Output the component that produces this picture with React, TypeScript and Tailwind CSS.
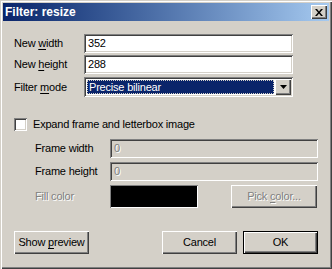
import React from 'react';

const sunken =
  'shadow-[inset_1px_1px_#808080,inset_-1px_-1px_#ffffff,inset_2px_2px_#404040,inset_-2px_-2px_#d4d0c8]';
const raised =
  'shadow-[inset_1px_1px_#ffffff,inset_-1px_-1px_#404040,inset_-2px_-2px_#808080]';

const Label: React.FC<{ pre: string; key_: string; post: string; className?: string }> = ({ pre, key_, post, className }) => (
  <span className={className}>
    {pre}
    <span className="underline underline-offset-[2px]">{key_}</span>
    {post}
  </span>
);

const DisabledText: React.FC<{ children: React.ReactNode }> = ({ children }) => (
  <span className="text-[#808080] [text-shadow:1px_1px_0_#ffffff]">{children}</span>
);

export default function App() {
  return (
    <div
      className={
        "w-[332px] h-[269px] bg-[#d4d0c8] p-[3px] flex flex-col text-[11px] tracking-[-0.2px] text-black font-['Liberation_Sans',Arial,sans-serif] " +
        'shadow-[inset_1px_1px_#d4d0c8,inset_2px_2px_#ffffff,inset_-1px_-1px_#404040,inset_-2px_-2px_#808080]'
      }
    >
      {/* title bar */}
      <div className="h-[18px] flex items-center justify-between pl-[2px] pr-[2px] bg-gradient-to-r from-[#0a246a] to-[#a6caf0]">
        <span className="text-white font-bold text-[12px] tracking-normal">Filter: resize</span>
        <div className={`w-[16px] h-[14px] bg-[#d4d0c8] flex items-center justify-center ${raised}`}>
          <svg width="8" height="7" viewBox="0 0 8 7">
            <path d="M0 0h2l2 2.5L6 0h2L5 3.5 8 7H6L4 4.5 2 7H0l3-3.5z" fill="#000" />
          </svg>
        </div>
      </div>

      <div className="flex flex-col pl-[11px]">
        <div className="mt-[13px] h-[19px] flex items-center">
          <Label pre="New " key_="w" post="idth" className="w-[70px]" />
          <div className={`w-[209px] h-[19px] bg-white flex items-center pl-[4px] ${sunken}`}>352</div>
        </div>
        <div className="mt-[2px] h-[19px] flex items-center">
          <Label pre="New " key_="h" post="eight" className="w-[70px]" />
          <div className={`w-[209px] h-[19px] bg-white flex items-center pl-[4px] ${sunken}`}>288</div>
        </div>
        <div className="mt-[3px] h-[20px] flex items-center">
          <Label pre="Filter " key_="m" post="ode" className="w-[70px]" />
          <div className={`w-[209px] h-[20px] bg-white flex items-stretch p-[2px] ${sunken}`}>
            <div className="flex-1 p-[1px]">
              <div className="h-full bg-[#0a246a] outline-1 outline-dotted outline-offset-[-1px] outline-[#d4d0c8] text-white flex items-center pl-[2px]">
                Precise bilinear
              </div>
            </div>
            <div className={`w-[16px] bg-[#d4d0c8] flex items-center justify-center ${raised}`}>
              <svg width="7" height="4" viewBox="0 0 7 4">
                <path d="M0 0h7L3.5 4z" fill="#000" />
              </svg>
            </div>
          </div>
        </div>

        <div className="mt-[21px] h-[13px] flex items-center">
          <div className={`w-[13px] h-[13px] bg-white ${sunken}`} />
          <span className="ml-[6px]">Expand frame and letterbox image</span>
        </div>

        <div className="mt-[8px] h-[19px] flex items-center pl-[21px]">
          <span className="w-[75px]">Frame width</span>
          <div className={`w-[208px] h-[19px] bg-[#d4d0c8] flex items-center pl-[4px] ${sunken}`}>
            <DisabledText>0</DisabledText>
          </div>
        </div>
        <div className="mt-[4px] h-[19px] flex items-center pl-[21px]">
          <span className="w-[75px]">Frame height</span>
          <div className={`w-[208px] h-[19px] bg-[#d4d0c8] flex items-center pl-[4px] ${sunken}`}>
            <DisabledText>0</DisabledText>
          </div>
        </div>
        <div className="mt-[4px] h-[23px] flex items-center pl-[21px]">
          <span className="w-[75px]">
            <DisabledText>Fill color</DisabledText>
          </span>
          <div className="w-[88px] h-[23px] bg-black shadow-[inset_1px_1px_#808080,inset_-1px_-1px_#ffffff]" />
          <div className={`ml-[33px] w-[86px] h-[23px] bg-[#d4d0c8] flex items-center justify-center ${raised}`}>
            <DisabledText>
              Pick <span className="underline underline-offset-[2px]">c</span>olor...
            </DisabledText>
          </div>
        </div>

        <div className="mt-[23px] h-[23px] flex items-center pr-[11px]">
          <div className={`w-[75px] h-[23px] flex items-center justify-center ${raised}`}>
            <Label pre="Show " key_="p" post="review" />
          </div>
          <div className={`ml-auto w-[75px] h-[23px] flex items-center justify-center ${raised}`}>Cancel</div>
          <div className="ml-[6px] w-[75px] h-[23px] border border-black flex">
            <div className={`flex-1 flex items-center justify-center ${raised}`}>OK</div>
          </div>
        </div>
      </div>
    </div>
  );
}
